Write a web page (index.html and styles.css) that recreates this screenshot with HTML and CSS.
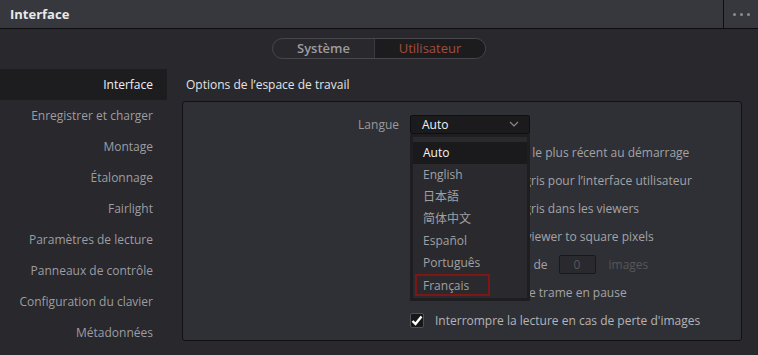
FILE: index.html
```html
<!doctype html>
<html lang="fr">
<head>
    <meta charset="UTF-8">
    <title>Interface</title>
    <link rel="stylesheet" href="styles.css">
</head>
<body>
<!-- barre de titre -->
<header class="topbar">
    <div class="topbar-title">Interface</div>
    <div class="topbar-menu"><span class="dot"></span><span class="dot"></span><span class="dot"></span></div>
</header>
<!-- onglets Système / Utilisateur -->
<div class="tabs-row">
    <div class="tabs">
        <span class="tab">Système</span>
        <span class="tab tab-active">Utilisateur</span>
    </div>
</div>
<div class="main">
    <nav class="sidebar">
        <div class="side-item side-selected">Interface</div>
        <div class="side-item">Enregistrer et charger</div>
        <div class="side-item">Montage</div>
        <div class="side-item">Étalonnage</div>
        <div class="side-item">Fairlight</div>
        <div class="side-item">Paramètres de lecture</div>
        <div class="side-item">Panneaux de contrôle</div>
        <div class="side-item">Configuration du clavier</div>
        <div class="side-item">Métadonnées</div>
    </nav>
    <section class="content">
        <div class="section-title">Options de l’espace de travail</div>
        <div class="panel">
            <div class="row">
                <div class="row-label">Langue</div>
                <div class="select">
                    <span class="select-value">Auto</span>
                    <svg class="chevron" width="10" height="6" viewBox="0 0 10 6"><path d="M1 1 L5 5 L9 1" fill="none" stroke="#8a8a8e" stroke-width="1.2"/></svg>
                    <!-- liste déroulante ouverte -->
                    <ul class="dropdown">
                        <li class="opt opt-current">Auto</li>
                        <li class="opt">English</li>
                        <li class="opt">日本語</li>
                        <li class="opt">简体中文</li>
                        <li class="opt">Español</li>
                        <li class="opt">Português</li>
                        <li class="opt opt-focus">Français</li>
                    </ul>
                </div>
            </div>
            <div class="row">
                <div class="row-label"></div>
                <span class="check"></span>
                <span class="row-text">Charger le projet le plus récent au démarrage</span>
            </div>
            <div class="row">
                <div class="row-label"></div>
                <span class="check"></span>
                <span class="row-text">Utiliser un fond gris pour l’interface utilisateur</span>
            </div>
            <div class="row">
                <div class="row-label"></div>
                <span class="check"></span>
                <span class="row-text">Utiliser un fond gris dans les viewers</span>
            </div>
            <div class="row">
                <div class="row-label"></div>
                <span class="check"></span>
                <span class="row-text">Conformer tout viewer to square pixels</span>
            </div>
            <div class="row">
                <div class="row-label"></div>
                <span class="check"></span>
                <span class="row-text">Relire en boucles de</span>
                <span class="num-input">0</span>
                <span class="row-text row-dim">images</span>
            </div>
            <div class="row">
                <div class="row-label"></div>
                <span class="check"></span>
                <span class="row-text">Afficher une seule trame en pause</span>
            </div>
            <div class="row">
                <div class="row-label"></div>
                <span class="check check-on">
                    <svg width="12" height="11" viewBox="0 0 12 11"><path d="M1.5 6 L4.5 9 L10.5 1.5" fill="none" stroke="#ffffff" stroke-width="2.4"/></svg>
                </span>
                <span class="row-text row-bright">Interrompre la lecture en cas de perte d'images</span>
            </div>
        </div>
    </section>
</div>
</body>
</html>
```

FILE: styles.css
```css
* {
    margin: 0;
    padding: 0;
    box-sizing: border-box;
}

body {
    width: 758px;
    height: 355px;
    overflow: hidden;
    background: #28282d;
    font-family: "Open Sans", "Noto Sans CJK SC", sans-serif;
    font-size: 12px;
    color: #a0a0a3;
}

/* barre de titre */
.topbar {
    height: 29px;
    display: flex;
    align-items: stretch;
    background: #37383d;
    border-bottom: 1px solid #0e0e10;
}

.topbar-title {
    flex: 1;
    padding-left: 10px;
    line-height: 28px;
    font-size: 13px;
    font-weight: 700;
    color: #e8e8ea;
}

.topbar-menu {
    width: 35px;
    display: flex;
    align-items: center;
    justify-content: center;
    gap: 4px;
    border-left: 1px solid #0e0e10;
}

.dot {
    width: 3px;
    height: 3px;
    border-radius: 50%;
    background: #8c8c90;
}

/* onglets */
.tabs-row {
    height: 40px;
    padding-top: 9px;
    display: flex;
    justify-content: center;
}

.tabs {
    height: 21px;
    display: flex;
    border: 1px solid #47474c;
    border-radius: 11px;
    overflow: hidden;
}

.tab {
    width: 101px;
    line-height: 19px;
    text-align: center;
    font-size: 13px;
    font-weight: 600;
    color: #9c9ca0;
}

.tab-active {
    width: 111px;
    background: #1c1c1f;
    border-left: 1px solid #3a3a3f;
    color: #a14e3d;
    font-weight: 400;
}

.main {
    display: flex;
}

/* menu latéral */
.sidebar {
    width: 167px;
}

.side-item {
    height: 31px;
    line-height: 31px;
    padding-right: 14px;
    text-align: right;
    font-size: 12px;
    color: #9d9da1;
    white-space: nowrap;
}

.side-selected {
    background: #1d1d20;
    color: #f0f0f2;
}

.content {
    flex: 1;
    padding-right: 16px;
}

.section-title {
    height: 32px;
    line-height: 31px;
    padding-left: 19px;
    font-size: 12px;
    color: #e4e4e6;
}

.panel {
    margin-left: 15px;
    height: 240px;
    padding-top: 8px;
    background: #2f3035;
    border: 1px solid #111113;
    border-radius: 3px;
}

.row {
    height: 28px;
    display: flex;
    align-items: center;
}

.row-label {
    width: 216px;
    margin-right: 11px;
    text-align: right;
    color: #9a9a9e;
    font-size: 12px;
}

.select {
    position: relative;
    width: 120px;
    height: 19px;
    display: flex;
    align-items: center;
    justify-content: space-between;
    padding: 0 10px 0 11px;
    background: #1b1b1e;
    border: 1px solid #0f0f11;
    border-radius: 2px;
}

.select-value {
    color: #f2f2f4;
    font-size: 12px;
}

/* liste déroulante */
.dropdown {
    position: absolute;
    left: -1px;
    top: 18px;
    width: 120px;
    padding: 5px 0 2px;
    list-style: none;
    background: #2a2a2e;
    border: 3px solid #1e1e21;
    z-index: 2;
}

.opt {
    height: 22px;
    line-height: 22px;
    padding-left: 10px;
    color: #a0a0a4;
    font-size: 12px;
    white-space: nowrap;
}

.opt-current {
    background: #1a1a1c;
    color: #f4f4f6;
}

.opt-focus {
    margin: 0 37px 0 2px;
    padding-left: 6px;
    line-height: 20px;
    border: 2px solid #7e1616;
}

.check {
    width: 14px;
    height: 15px;
    margin-right: 11px;
    display: flex;
    align-items: center;
    justify-content: center;
    background: #17171a;
    border: 1px solid #505055;
    border-radius: 2px;
}

.row-text {
    font-size: 12px;
    color: #a3a3a7;
    white-space: nowrap;
}

.row-bright {
    color: #b4b4b8;
}

.row-dim {
    margin-left: 13px;
    color: #56565b;
}

.num-input {
    width: 37px;
    height: 19px;
    margin-left: 11px;
    line-height: 17px;
    text-align: center;
    color: #56565b;
    background: #2a2a2e;
    border: 1px solid #19191b;
    border-radius: 2px;
}
```
